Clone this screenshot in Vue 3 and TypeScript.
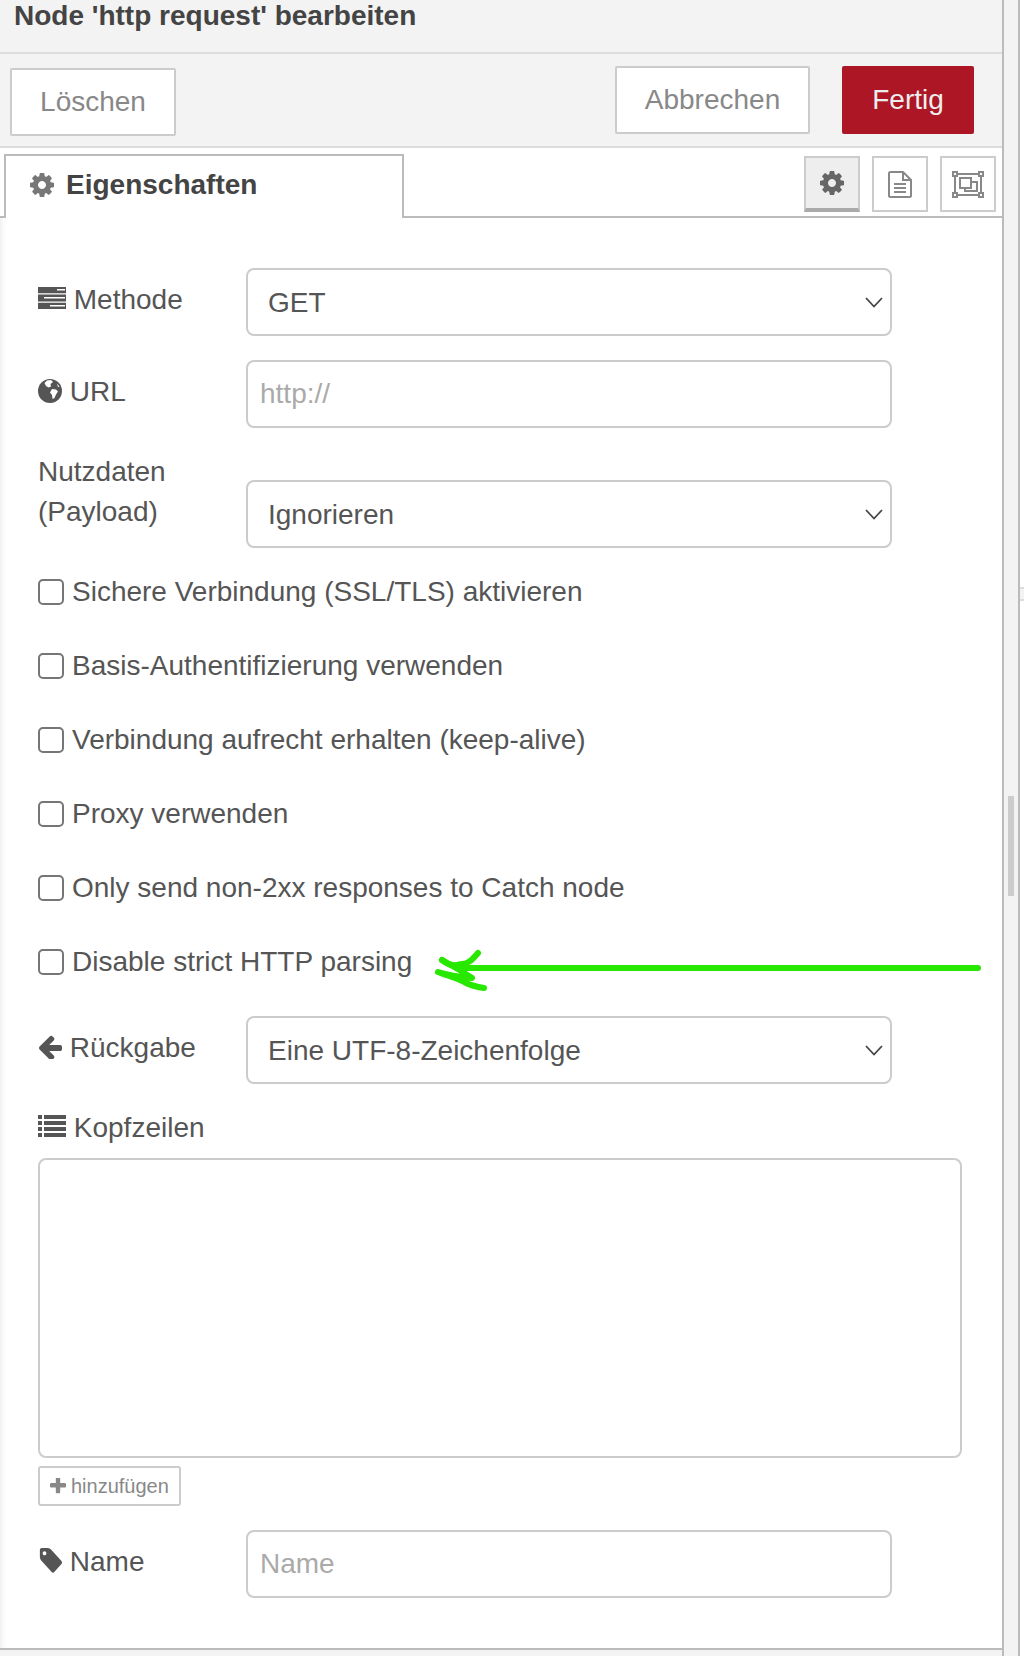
<template>
    <div class="page">
        <div class="tray">
            <div class="title">Node 'http request' bearbeiten</div>

            <div class="toolbar">
                <button class="btn btn--delete">Löschen</button>
                <div class="toolbar-right">
                    <button class="btn btn--cancel">Abbrechen</button>
                    <button class="btn btn--primary">Fertig</button>
                </div>
            </div>

            <div class="tabs">
                <div class="tab">
                    <svg class="tab-icon" viewBox="128 128 1536 1536"><path :d="icons.cog" /></svg>
                    <span>Eigenschaften</span>
                </div>
                <div class="tab-buttons">
                    <button class="tab-btn tab-btn--active">
                        <svg class="tab-btn-gear" viewBox="128 128 1536 1536"><path :d="icons.cog" /></svg>
                    </button>
                    <button class="tab-btn">
                        <svg class="tab-btn-doc" viewBox="0 0 24 27">
                            <path d="M1 2.500 a1.500 1.500 0 0 1 1.500-1.500 H15 L23 9 V24.500 a1.500 1.500 0 0 1-1.500 1.500 H2.500 A1.500 1.500 0 0 1 1 24.500 Z" />
                            <path d="M15 1 V9 H23 M6 13 H18 M6 17 H18 M6 21 H18" />
                        </svg>
                    </button>
                    <button class="tab-btn">
                        <svg class="tab-btn-frame" viewBox="0 0 32 27">
                            <path d="M3 3 H29 V24 H3 Z" />
                            <path d="M8 7 H19 V17 H8 Z M19 11 H25 V20 H13 V17" />
                            <path class="frame-corner" d="M1 1 H5 V5 H1 Z M27 1 H31 V5 H27 Z M1 22 H5 V26 H1 Z M27 22 H31 V26 H27 Z" />
                        </svg>
                    </button>
                </div>
            </div>

            <form class="form" @submit.prevent>
                <div class="row">
                    <label class="label">
                        <svg class="icon icon--wide" viewBox="0 0 28 22">
                            <path d="M0 0 H28 V6.300 H0 Z M0 7.500 H28 V14.500 H0 Z M0 15.700 H28 V22 H0 Z" />
                            <path class="icon-slot" d="M19 2 H27 V3.500 H19 Z M6 10 H27 V11.500 H6 Z M12 18 H27 V19.500 H12 Z" />
                        </svg>
                        Methode
                    </label>
                    <div class="select-wrap">
                        <select class="field field--select"><option>GET</option></select>
                        <svg class="chevron" viewBox="0 0 18 11"><path d="M1 1 L9 9.500 L17 1" /></svg>
                    </div>
                </div>

                <div class="row">
                    <label class="label">
                        <svg class="icon icon--globe" viewBox="0 0 24 24">
                            <circle cx="12" cy="12" r="12" />
                            <path class="icon-slot" d="M9 1.500 L13 1 L15 3 L12.500 5 L13 7.500 L10.500 8.500 L8 7 L6.500 4 Z M14 10 L18 10.500 L20 12.500 L18 15.500 L16.500 19 L14.500 20 L14 16 L12 13.500 Z M19 4.500 L21.500 7.500 L20 8 Z" />
                        </svg>
                        URL
                    </label>
                    <input class="field" type="text" placeholder="http://" />
                </div>

                <div class="row row--tall">
                    <label class="label">Nutzdaten<br />(Payload)</label>
                    <div class="select-wrap">
                        <select class="field field--select"><option>Ignorieren</option></select>
                        <svg class="chevron" viewBox="0 0 18 11"><path d="M1 1 L9 9.500 L17 1" /></svg>
                    </div>
                </div>

                <div class="checks">
                    <label v-for="item in checks" :key="item" class="check">
                        <input type="checkbox" />
                        <span>{{ item }}</span>
                    </label>
                </div>

                <div class="row">
                    <label class="label">
                        <svg class="icon icon--arrow" viewBox="128 128 1536 1536"><path :d="icons.arrow" /></svg>
                        Rückgabe
                    </label>
                    <div class="select-wrap">
                        <select class="field field--select"><option>Eine UTF-8-Zeichenfolge</option></select>
                        <svg class="chevron" viewBox="0 0 18 11"><path d="M1 1 L9 9.500 L17 1" /></svg>
                    </div>
                </div>

                <label class="label label--block">
                    <svg class="icon icon--wide" viewBox="0 0 28 22">
                        <path d="M0 0 H4 V4 H0 Z M6 0 H28 V4 H6 Z M0 6 H4 V10 H0 Z M6 6 H28 V10 H6 Z M0 12 H4 V16 H0 Z M6 12 H28 V16 H6 Z M0 18 H4 V22 H0 Z M6 18 H28 V22 H6 Z" />
                    </svg>
                    Kopfzeilen
                </label>
                <div class="headers-list"></div>
                <button class="btn-add">
                    <svg class="plus" viewBox="192 192 1408 1408"><path :d="icons.plus" /></svg>
                    hinzufügen
                </button>

                <div class="row row--name">
                    <label class="label">
                        <svg class="icon icon--tag" viewBox="0 128 1643 1536" preserveAspectRatio="none"><path :d="icons.tag" /></svg>
                        Name
                    </label>
                    <input class="field" type="text" placeholder="Name" />
                </div>
            </form>

            <div class="tray-footer"></div>

            <svg class="scribble" viewBox="0 0 1002 1656">
                <path d="M978 968 H460" />
                <path d="M478 953 C472 960 468 964 462 964 C455 966 450 966 442 960" />
                <path d="M442 960 C452 966 464 972 472 978 C462 977 448 975 438 972 C448 976 458 978 466 983 C472 986 478 987 484 988" />
            </svg>
        </div>

        <div class="gutter">
            <div class="thumb"></div>
        </div>
        <div class="edge">
            <div class="edge-tick"></div>
        </div>
    </div>
</template>

<script setup lang="ts">
const checks: string[] = [
    "Sichere Verbindung (SSL/TLS) aktivieren",
    "Basis-Authentifizierung verwenden",
    "Verbindung aufrecht erhalten (keep-alive)",
    "Proxy verwenden",
    "Only send non-2xx responses to Catch node",
    "Disable strict HTTP parsing",
];

const icons = {
    cog: "M1152 896q0-106-75-181t-181-75-181 75-75 181 75 181 181 75 181-75 75-181zm512-109v222q0 12-8 23t-20 13l-185 28q-19 54-39 91 35 50 107 138 10 12 10 25t-9 23q-27 37-99 108t-94 71q-12 0-26-9l-138-108q-44 23-91 38-16 136-29 186-7 28-36 28h-222q-14 0-24.500-8.500t-11.500-21.500l-28-184q-49-16-90-37l-141 107q-10 9-25 9-14 0-25-11-126-114-165-168-7-10-7-23 0-12 8-23 15-21 51-66.500t54-70.500q-27-50-41-99l-183-27q-13-2-21-12.500t-8-23.500v-222q0-12 8-23t19-13l186-28q14-46 39-92-40-57-107-138-10-12-10-24 0-10 9-23 26-36 98.500-107.500t94.500-71.500q13 0 26 10l138 107q44-23 91-38 16-136 29-186 7-28 36-28h222q14 0 24.500 8.500t11.500 21.500l28 184q49 16 90 37l142-107q9-9 24-9 13 0 25 10 129 119 165 170 7 8 7 22 0 12-8 23-15 21-51 66.500t-54 70.500q26 50 41 98l183 28q13 2 21 12.500t8 23.500z",
    arrow: "M1664 896v128q0 53-32.500 90.500t-84.500 37.500h-704l293 294q38 36 38 90t-38 90l-75 76q-37 37-90 37-52 0-91-37l-651-652q-37-37-37-90 0-52 37-91l651-650q38-38 91-38 52 0 90 38l75 74q38 38 38 91t-38 91l-293 293h704q52 0 84.500 37.500t32.500 90.500z",
    tag: "M576 448q0-53-37.500-90.500t-90.500-37.500-90.500 37.500-37.500 90.500 37.500 90.500 90.500 37.500 90.500-37.500 37.500-90.500zm1067 576q0 53-37 90l-491 492q-39 37-91 37-53 0-90-37l-715-716q-38-37-64.500-101t-26.500-117v-416q0-52 38-90t90-38h416q53 0 117 26.500t102 64.500l715 714q37 39 37 91z",
    plus: "M1600 736v192q0 40-28 68t-68 28h-416v416q0 40-28 68t-68 28h-192q-40 0-68-28t-28-68v-416h-416q-40 0-68-28t-28-68v-192q0-40 28-68t68-28h416v-416q0-40 28-68t68-28h192q40 0 68 28t28 68v416h416q40 0 68 28t28 68z",
};
</script>

<style>
html,
body {
    margin: 0;
    background: #fff;
}
</style>

<style scoped>
.page {
    display: flex;
    width: 1024px;
    height: 1656px;
    overflow: hidden;
    background: #fff;
    color: #555;
    font-family: "Liberation Sans", Arial, sans-serif;
    font-size: 28px;
}

.tray {
    position: relative;
    display: flex;
    flex-direction: column;
    box-sizing: border-box;
    width: 1004px;
    border-right: 2px solid #bbb;
}

.title {
    box-sizing: border-box;
    height: 54px;
    padding: 1px 14px 0;
    border-bottom: 2px solid #ddd;
    background: #f3f3f3;
    color: #444;
    font-size: 28px;
    font-weight: bold;
    line-height: 30px;
    white-space: nowrap;
}

.toolbar {
    display: flex;
    justify-content: space-between;
    box-sizing: border-box;
    height: 94px;
    padding: 12px 28px 0 10px;
    border-bottom: 2px solid #ddd;
    background: #f3f3f3;
}

.toolbar-right {
    display: flex;
    gap: 32px;
}

.btn {
    box-sizing: border-box;
    height: 68px;
    padding: 0;
    border: 2px solid #ccc;
    border-radius: 2px;
    background: #fff;
    color: #888;
    font: inherit;
}

.btn--delete {
    width: 166px;
    margin-top: 2px;
}

.btn--cancel {
    width: 195px;
}

.btn--primary {
    width: 132px;
    border-color: #ad1625;
    background: #ad1625;
    color: #eee;
}

.tabs {
    display: flex;
    justify-content: space-between;
    box-sizing: border-box;
    height: 70px;
    padding: 6px 6px 0 4px;
    border-bottom: 2px solid #bbb;
}

.tab {
    display: flex;
    align-items: center;
    gap: 12px;
    box-sizing: border-box;
    width: 400px;
    height: 64px;
    padding: 0 0 4px 24px;
    border: 2px solid #bbb;
    border-bottom: none;
    background: #fff;
    color: #444;
    font-weight: bold;
}

.tab-icon {
    width: 24px;
    height: 24px;
    fill: #777;
}

.tab-buttons {
    display: flex;
    gap: 12px;
    padding-top: 2px;
}

.tab-btn {
    display: flex;
    align-items: center;
    justify-content: center;
    box-sizing: border-box;
    width: 56px;
    height: 56px;
    padding: 0;
    border: 2px solid #ccc;
    background: #fff;
}

.tab-btn--active {
    border-bottom: 4px solid #aaa;
    background: #eee;
}

.tab-btn-gear {
    width: 24px;
    height: 24px;
    fill: #666;
}

.tab-btn-doc {
    width: 24px;
    height: 27px;
    fill: none;
    stroke: #888;
    stroke-width: 2;
}

.tab-btn-frame {
    width: 32px;
    height: 27px;
    fill: none;
    stroke: #888;
    stroke-width: 2;
}

.frame-corner {
    fill: #fff;
}

.form {
    flex: 1;
    display: flex;
    flex-direction: column;
    box-sizing: border-box;
    padding: 50px 0 0 38px;
    background: #fff;
    box-shadow: inset 6px 0 6px -5px #e8e8e8;
}

.row {
    display: flex;
    align-items: flex-start;
    margin-bottom: 24px;
}

.row--tall {
    align-items: flex-end;
    margin-bottom: 24px;
}

.row--name {
    margin-top: 24px;
    margin-bottom: 0;
}

.label {
    flex: none;
    display: block;
    width: 208px;
    padding-top: 12px;
    line-height: 40px;
    white-space: nowrap;
}

.row--tall .label {
    padding-top: 0;
    padding-bottom: 16px;
}

.label--block {
    padding-top: 0;
    margin-bottom: 10px;
}

.icon {
    width: 24px;
    height: 24px;
    fill: #555;
    vertical-align: -3px;
}

.icon--wide {
    width: 28px;
    height: 22px;
    vertical-align: 0;
}

.icon--globe {
    vertical-align: -2px;
}

.icon--arrow {
    vertical-align: -2px;
}

.icon--tag {
    height: 25px;
    vertical-align: -2px;
}

.icon-slot {
    fill: #fff;
}

.select-wrap {
    position: relative;
    width: 646px;
}

.field {
    box-sizing: border-box;
    width: 646px;
    height: 68px;
    padding: 0 12px;
    border: 2px solid #ccc;
    border-radius: 8px;
    outline: none;
    background: #fff;
    color: #555;
    font: inherit;
}

.field::placeholder {
    color: #aaa;
    opacity: 1;
}

.field--select {
    display: block;
    padding-left: 20px;
    appearance: none;
}

.chevron {
    position: absolute;
    top: 29px;
    right: 9px;
    width: 18px;
    height: 11px;
    fill: none;
    stroke: #444;
    stroke-width: 1.800;
}

.checks {
    display: flex;
    flex-direction: column;
    gap: 34px;
    margin-bottom: 34px;
}

.check {
    display: flex;
    align-items: center;
    gap: 8px;
    height: 40px;
    line-height: 40px;
}

.check input {
    flex: none;
    box-sizing: border-box;
    width: 26px;
    height: 26px;
    margin: 0;
    border: 2px solid #767676;
    border-radius: 5px;
    background: #fff;
    appearance: none;
}

.headers-list {
    box-sizing: border-box;
    width: 924px;
    height: 300px;
    border: 2px solid #ccc;
    border-radius: 8px;
}

.btn-add {
    display: flex;
    align-items: center;
    gap: 5px;
    box-sizing: border-box;
    width: 143px;
    height: 40px;
    margin-top: 8px;
    padding: 0 0 0 10px;
    border: 2px solid #ccc;
    border-radius: 3px;
    background: #fff;
    color: #888;
    font-family: inherit;
    font-size: 20px;
    white-space: nowrap;
}

.plus {
    width: 16px;
    height: 16px;
    fill: #888;
}

.tray-footer {
    box-sizing: border-box;
    height: 8px;
    border-top: 2px solid #bbb;
    background: #f3f3f3;
}

.scribble {
    position: absolute;
    top: 0;
    left: 0;
    width: 1002px;
    height: 1656px;
    fill: none;
    stroke: #28e800;
    stroke-width: 6;
    stroke-linecap: round;
    stroke-linejoin: round;
    pointer-events: none;
}

.gutter {
    position: relative;
    flex: none;
    box-sizing: border-box;
    width: 16px;
    border-right: 2px solid #bbb;
    background: #f3f3f3;
}

.thumb {
    position: absolute;
    top: 796px;
    left: 4px;
    width: 6px;
    height: 100px;
    background: #ccc;
}

.edge {
    position: relative;
    flex: 1;
}

.edge-tick {
    position: absolute;
    top: 587px;
    left: 0;
    right: 0;
    box-sizing: border-box;
    height: 14px;
    border-top: 2px solid #ddd;
    border-bottom: 2px solid #ddd;
    background: #f3f3f3;
}
</style>
